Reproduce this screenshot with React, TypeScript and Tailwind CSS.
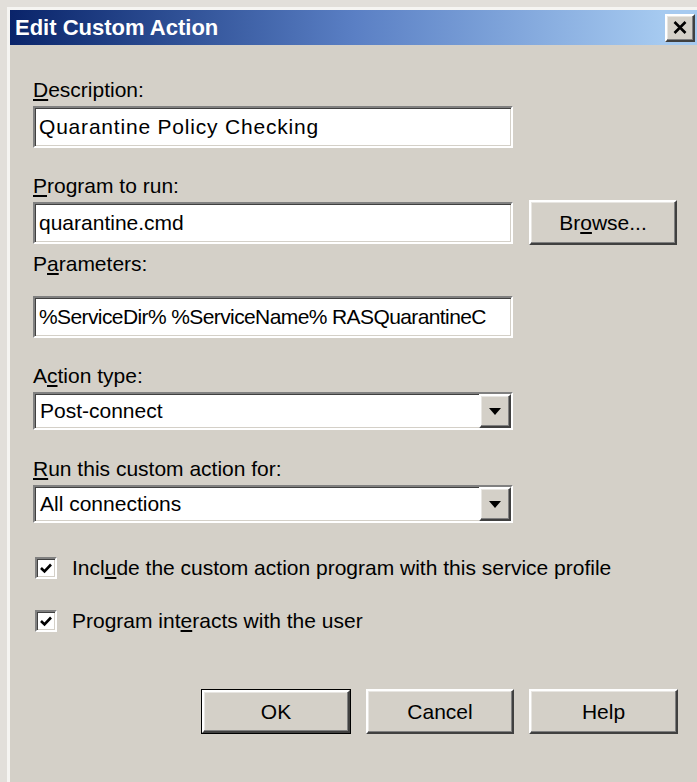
import type { ReactNode } from "react";

// classic 3D bevels
const sunken =
  "border-2 border-t-[#808080] border-l-[#808080] border-b-white border-r-white shadow-[inset_1px_1px_0_#404040,inset_-1px_-1px_0_#d4d0c8]";
const raised =
  "border-2 border-t-white border-l-white border-b-[#404040] border-r-[#404040] shadow-[inset_-1px_-1px_0_#808080,inset_1px_1px_0_#e8e6e2]";

function Label({ children, className = "" }: { children: ReactNode; className?: string }) {
  return <div className={`leading-[24px] whitespace-nowrap ${className}`}>{children}</div>;
}

function TextBox({ value, className = "" }: { value: string; className?: string }) {
  return (
    <div className={`${sunken} bg-white h-[42px] w-[480px] flex items-center pl-[4px] overflow-hidden whitespace-nowrap ${className}`}>
      {value}
    </div>
  );
}

function Combo({ value, className = "" }: { value: string; className?: string }) {
  return (
    <div className={`${sunken} bg-white h-[38px] w-[480px] flex items-center ${className}`}>
      <span className="flex-1 pl-[5px] whitespace-nowrap">{value}</span>
      <div className={`${raised} bg-[#d4d0c8] w-[32px] h-full flex items-center justify-center`}>
        <svg width="12" height="7" viewBox="0 0 12 7">
          <polygon points="0,0 12,0 6,7" fill="#000" />
        </svg>
      </div>
    </div>
  );
}

function Button({ children, primary = false, className = "" }: { children: ReactNode; primary?: boolean; className?: string }) {
  const face = (
    <div className={`${raised} bg-[#d4d0c8] h-full w-full flex items-center justify-center`}>{children}</div>
  );
  return (
    <div className={`h-[45px] ${primary ? "border border-black" : ""} ${className}`}>{face}</div>
  );
}

function Check({ children, className = "" }: { children: ReactNode; className?: string }) {
  return (
    <div className={`flex items-center h-[24px] ${className}`}>
      <div className={`${sunken} bg-white w-[22px] h-[22px] ml-[2px] flex items-center justify-center`}>
        <svg width="12" height="11" viewBox="0 0 12 11">
          <polyline points="1,5 4.5,8.5 11,1.5" fill="none" stroke="#000" strokeWidth="2.6" />
        </svg>
      </div>
      <span className="ml-[15px] leading-[24px] whitespace-nowrap">{children}</span>
    </div>
  );
}

export default function App() {
  return (
    <div className="w-[697px] h-[782px] overflow-hidden bg-[#e2dfda] text-black text-[21px] font-['Liberation_Sans',Arial,sans-serif]">
      <div className="ml-[7px] mt-[7px] h-full border-l-[3px] border-t-[3px] border-[#f6f5f2] bg-[#d4d0c8] flex flex-col">
        {/* title bar */}
        <div className="h-[35px] bg-linear-to-r from-[#0a246a] from-0% via-[#5a7fc4] via-50% to-[#a6caf0] to-95% flex items-center justify-between pl-[5px] pr-[2px]">
          <span className="font-bold text-[22px] text-white leading-none">Edit Custom Action</span>
          <div className={`${raised} bg-[#d4d0c8] w-[30px] h-[28px] flex items-center justify-center`}>
            <svg width="14" height="13" viewBox="0 0 14 13">
              <path d="M1.5 1 L12.5 12 M12.5 1 L1.5 12" stroke="#000" strokeWidth="2.6" />
            </svg>
          </div>
        </div>

        {/* form */}
        <div className="flex flex-col pl-[23px] pr-[19px] pt-[33px]">
          <Label>
            <u>D</u>escription:
          </Label>
          <TextBox className="mt-[4px] tracking-[0.8px]" value="Quarantine Policy Checking" />

          <Label className="mt-[26px]">
            <u>P</u>rogram to run:
          </Label>
          <div className="flex items-center mt-[2px] h-[45px]">
            <TextBox value="quarantine.cmd" />
            <Button className="ml-[16px] w-[148px]">
              <span>
                Br<u>o</u>wse...
              </span>
            </Button>
          </div>

          <Label className="mt-[7px]">
            P<u>a</u>rameters:
          </Label>
          <TextBox className="mt-[20px] tracking-[-0.6px]" value="%ServiceDir% %ServiceName% RASQuarantineC" />

          <Label className="mt-[26px]">
            A<u>c</u>tion type:
          </Label>
          <Combo className="mt-[4px]" value="Post-connect" />

          <Label className="mt-[27px]">
            <u>R</u>un this custom action for:
          </Label>
          <Combo className="mt-[4px]" value="All connections" />

          <Check className="mt-[33px]">
            Incl<u>u</u>de the custom action program with this service profile
          </Check>
          <Check className="mt-[29px]">
            Program int<u>e</u>racts with the user
          </Check>

          <div className="flex justify-end gap-[15px] mt-[56px]">
            <Button primary className="w-[150px]">
              OK
            </Button>
            <Button className="w-[148px]">Cancel</Button>
            <Button className="w-[149px]">Help</Button>
          </div>
        </div>
      </div>
    </div>
  );
}
